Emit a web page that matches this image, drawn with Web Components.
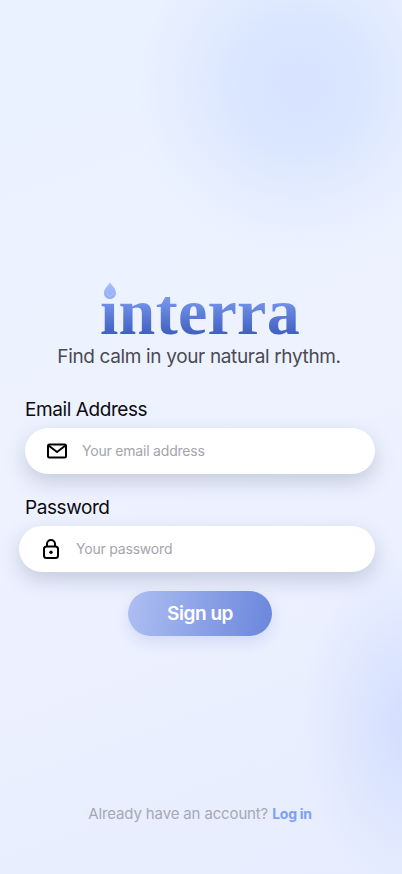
<!DOCTYPE html>
<html lang="en">
<head>
<meta charset="utf-8">
<title>interra</title>
<style>
html, body { margin: 0; height: 100%; }
body { font-family: "Inter", "Noto Sans", sans-serif; }
</style>
</head>
<body>
<signup-screen>
  <brand-logo></brand-logo>
  <p>Find calm in your natural rhythm.</p>
  <text-field label="Email Address" placeholder="Your email address" icon="mail"></text-field>
  <text-field label="Password" placeholder="Your password" icon="lock" shifted></text-field>
  <pill-button>Sign up</pill-button>
  <foot-note link="Log in">Already have an account?</foot-note>
</signup-screen>
<script>
const screenTemplate = document.createElement("template");
screenTemplate.innerHTML = `
<style>
:host {
  display: flex;
  flex-direction: column;
  width: 402px;
  height: 874px;
  box-sizing: border-box;
  padding: 279px 27px 0 25px;
  overflow: hidden;
  background:
    radial-gradient(circle 170px at 300px 85px, #d7e3ff 0%, rgba(215,227,255,.85) 35%, rgba(215,227,255,.35) 70%, rgba(215,227,255,0) 100%),
    radial-gradient(ellipse 110px 170px at 410px 725px, #d3defe 0%, rgba(211,222,254,0) 100%),
    linear-gradient(160deg, #eaf2ff 0%, #eef2ff 50%, #e7edfe 100%);
}
::slotted(p) {
  margin: 0 2px 29px 0;
  text-align: center;
  font-size: 19px;
  line-height: 24px;
  letter-spacing: -0.35px;
  color: #4a4a52;
}
</style>
<slot></slot>
`;
class SignupScreen extends HTMLElement {
  constructor() {
    super();
    this.attachShadow({ mode: "open" }).appendChild(screenTemplate.content.cloneNode(true));
  }
}

const logoTemplate = document.createElement("template");
logoTemplate.innerHTML = `
<style>
:host {
  display: block;
  position: relative;
  height: 66px;
  text-align: center;
}
#word {
  display: inline-block;
  font-family: "Liberation Serif", serif;
  font-weight: 700;
  font-size: 66px;
  line-height: 66px;
  letter-spacing: 0.3px;
  background: linear-gradient(180deg, #7d9bf0 25%, #3f5fbe 85%);
  -webkit-background-clip: text;
  background-clip: text;
  color: transparent;
}
svg {
  position: absolute;
  left: 78px;
  top: 3px;
}
</style>
<span id="word">interra</span>
<svg width="14" height="17" viewBox="0 0 14 17">
  <defs><linearGradient id="drop" x1="0" y1="0" x2="0" y2="1">
    <stop offset="0" stop-color="#a9c0f9"/><stop offset="1" stop-color="#92adf5"/>
  </linearGradient></defs>
  <path d="M7 0C8 3 13 6 13 11C13 14.500 10.300 17 7 17C3.700 17 1 14.500 1 11C1 6 6 3 7 0Z" fill="url(#drop)"/>
  <path d="M4.500 11.500C5 13.500 6 14.300 7 14.300C8 14.300 9 13.500 9.500 11.500" fill="none" stroke="#b6c9fa" stroke-width="1"/>
</svg>
`;
class BrandLogo extends HTMLElement {
  constructor() {
    super();
    this.attachShadow({ mode: "open" }).appendChild(logoTemplate.content.cloneNode(true));
  }
}

const icons = {
  mail: `<svg width="22" height="18" viewBox="0 0 22 18" fill="none" stroke="#000" stroke-width="2" stroke-linejoin="round">
    <rect x="2" y="2.500" width="18" height="13" rx="1.500"/><path d="M2.500 3.500L11 10L19.500 3.500"/></svg>`,
  lock: `<svg width="18" height="22" viewBox="0 0 18 22" fill="none" stroke="#000" stroke-width="2">
    <rect x="2" y="8.500" width="14" height="11.500" rx="2.500"/><path d="M5 8.500V6a4 4 0 0 1 8 0v2.500"/><circle cx="9" cy="14.200" r="1.700" fill="#000" stroke="none"/></svg>`
};

const fieldTemplate = document.createElement("template");
fieldTemplate.innerHTML = `
<style>
:host { display: block; margin-bottom: 22px; }
#label {
  font-size: 19px;
  line-height: 24px;
  letter-spacing: -0.42px;
  color: #0c0c10;
  margin-bottom: 6px;
}
#box {
  display: flex;
  align-items: center;
  gap: 14px;
  height: 46px;
  padding-left: 21px;
  border-radius: 23px;
  background: #fff;
  box-shadow: 0 8px 20px rgba(80,90,125,.25);
}
:host([shifted]) #box { margin-left: -6px; }
#icon { display: flex; width: 22px; justify-content: center; }
#hint { margin-bottom: 2px; font-size: 14px; letter-spacing: -0.2px; color: #a3a5ab; }
</style>
<div id="label"></div>
<div id="box"><span id="icon"></span><span id="hint"></span></div>
`;
class TextField extends HTMLElement {
  constructor() {
    super();
    const shadow = this.attachShadow({ mode: "open" });
    shadow.appendChild(fieldTemplate.content.cloneNode(true));
    shadow.getElementById("label").textContent = this.getAttribute("label");
    shadow.getElementById("hint").textContent = this.getAttribute("placeholder");
    shadow.getElementById("icon").innerHTML = icons[this.getAttribute("icon")];
  }
}

const buttonTemplate = document.createElement("template");
buttonTemplate.innerHTML = `
<style>
:host {
  display: flex;
  align-self: center;
  align-items: center;
  justify-content: center;
  width: 144px;
  height: 45px;
  margin-top: -3px;
  border-radius: 23px;
  background: linear-gradient(100deg, #aebff2 0%, #6b86dc 100%);
  box-shadow: 0 6px 14px rgba(100,120,200,.18);
  color: #fff;
  font-size: 19px;
  font-weight: 600;
  letter-spacing: -0.45px;
}
</style>
<slot></slot>
`;
class PillButton extends HTMLElement {
  constructor() {
    super();
    this.attachShadow({ mode: "open" }).appendChild(buttonTemplate.content.cloneNode(true));
  }
}

const noteTemplate = document.createElement("template");
noteTemplate.innerHTML = `
<style>
:host {
  display: block;
  margin: 168px 0 0;
  text-align: center;
  font-size: 15px;
  line-height: 20px;
  letter-spacing: -0.14px;
  color: #a6a9b3;
}
b { color: #7d9ff5; font-size: 14px; font-weight: 700; letter-spacing: -0.3px; }
</style>
<slot></slot> <b></b>
`;
class FootNote extends HTMLElement {
  constructor() {
    super();
    const shadow = this.attachShadow({ mode: "open" });
    shadow.appendChild(noteTemplate.content.cloneNode(true));
    shadow.querySelector("b").textContent = this.getAttribute("link");
  }
}

customElements.define("signup-screen", SignupScreen);
customElements.define("brand-logo", BrandLogo);
customElements.define("text-field", TextField);
customElements.define("pill-button", PillButton);
customElements.define("foot-note", FootNote);
</script>
</body>
</html>
